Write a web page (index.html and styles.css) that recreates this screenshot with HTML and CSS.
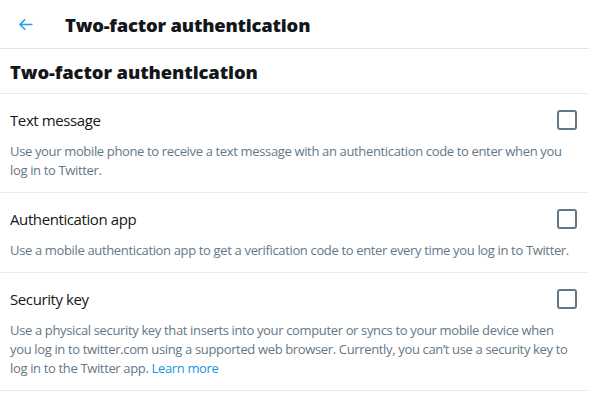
FILE: index.html
```html
<!DOCTYPE html>
<html>
<head>
    <title>Two-factor authentication</title>
    <link rel="stylesheet" href="styles.css">
</head>
<body>
    <div class="header">
        <a class="back" href="#">
            <svg viewBox="0 0 24 24" width="19" height="19"><path d="M20 11H7.414l4.293-4.293a1 1 0 0 0-1.414-1.414l-6 6a1 1 0 0 0 0 1.414l6 6a1 1 0 0 0 1.414-1.414L7.414 13H20a1 1 0 1 0 0-2z"/></svg>
        </a>
        <h1>Two-factor authentication</h1>
    </div>
    <div class="section-title">
        <h2>Two-factor authentication</h2>
    </div>
    <div class="option">
        <div class="option-top">
            <span class="option-label">Text message</span>
            <span class="check"></span>
        </div>
        <p class="option-desc">Use your mobile phone to receive a text message with an authentication code to enter when you log in to Twitter.</p>
    </div>
    <div class="option">
        <div class="option-top">
            <span class="option-label">Authentication app</span>
            <span class="check"></span>
        </div>
        <p class="option-desc">Use a mobile authentication app to get a verification code to enter every time you log in to Twitter.</p>
    </div>
    <div class="option">
        <div class="option-top">
            <span class="option-label">Security key</span>
            <span class="check"></span>
        </div>
        <p class="option-desc">Use a physical security key that inserts into your computer or syncs to your mobile device when you log in to twitter.com using a supported web browser. Currently, you can’t use a security key to log in to the Twitter app. <a href="#">Learn more</a></p>
    </div>
</body>
</html>
```
FILE: styles.css
```css
body {
    margin: 0;
    font-family: "Open Sans", "Noto Sans", Arial, sans-serif;
    background-color: #fff;
    color: #14171a;
}

.header {
    height: 48px;
    display: flex;
    align-items: center;
    border-bottom: 1px solid #e1e3e6;
}

.back {
    width: 65px;
    display: flex;
    padding-left: 16px;
    box-sizing: border-box;
}

.back svg {
    fill: #1da1f2;
}

.header h1 {
    margin: 0;
    font-size: 18.4px;
    font-weight: 800;
    letter-spacing: -0.2px;
}

.section-title {
    height: 44px;
    display: flex;
    align-items: center;
    padding-left: 10px;
    border-bottom: 1px solid #e6ecf0;
}

.section-title h2 {
    margin: 0;
    font-size: 18.4px;
    font-weight: 800;
    letter-spacing: -0.1px;
}

.option {
    padding: 10px 12px 12px 10px;
    border-bottom: 1px solid #e6ecf0;
}

.option-top {
    display: flex;
    justify-content: space-between;
    align-items: center;
    height: 32px;
}

.option-label {
    font-size: 15px;
    letter-spacing: -0.4px;
}

.check {
    width: 16px;
    height: 16px;
    border: 2px solid #657786;
    border-radius: 3px;
}

.option-desc {
    margin: 6px 0 0;
    font-size: 13px;
    line-height: 19px;
    color: #657786;
    letter-spacing: -0.35px;
}

.option-desc a {
    color: #1b95e0;
    text-decoration: none;
}
```
